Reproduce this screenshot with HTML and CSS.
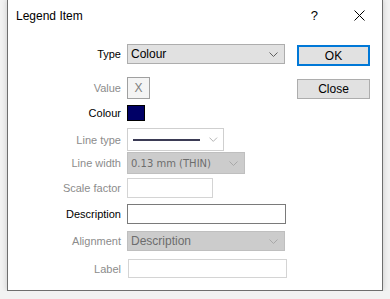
FILE: index.html
```html
<!DOCTYPE html>
<html lang="en">
<head>
    <meta charset="UTF-8">
    <meta name="viewport" content="width=device-width, initial-scale=1.0">
    <title>Legend Item</title>
    <link rel="stylesheet" href="styles.css">
</head>
<body>
    <div class="dialog">
        <div class="titlebar">
            <span class="title">Legend Item</span>
            <span class="help">?</span>
            <span class="close-x">
                <svg width="11" height="11" viewBox="0 0 11 11"><path d="M0.5 0.5 L10.5 10.5 M10.5 0.5 L0.5 10.5" stroke="#000" stroke-width="1" fill="none"/></svg>
            </span>
        </div>
        <div class="body">
            <div class="fields">
                <div class="row r-type">
                    <label>Type</label>
                    <div class="select wide">
                        <span>Colour</span>
                        <svg class="chev" width="9" height="5" viewBox="0 0 9 5"><path d="M0.5 0.5 L4.5 4.5 L8.5 0.5" stroke="#606060" fill="none"/></svg>
                    </div>
                </div>
                <div class="row r-value">
                    <label class="off">Value</label>
                    <div class="xbox">X</div>
                </div>
                <div class="row r-colour">
                    <label>Colour</label>
                    <div class="swatch"></div>
                </div>
                <div class="row r-linetype">
                    <label class="off">Line type</label>
                    <div class="linebox">
                        <span class="line"></span>
                        <svg class="chev" width="9" height="5" viewBox="0 0 9 5"><path d="M0.5 0.5 L4.5 4.5 L8.5 0.5" stroke="#b0b0b0" fill="none"/></svg>
                    </div>
                </div>
                <div class="row r-linewidth">
                    <label class="off">Line width</label>
                    <div class="select disabled lw">
                        <span class="tahoma">0.13 mm (THIN)</span>
                        <svg class="chev" width="9" height="5" viewBox="0 0 9 5"><path d="M0.5 0.5 L4.5 4.5 L8.5 0.5" stroke="#a8a8a8" fill="none"/></svg>
                    </div>
                </div>
                <div class="row r-scale">
                    <label class="off">Scale factor</label>
                    <div class="input light scale"></div>
                </div>
                <div class="row r-desc">
                    <label>Description</label>
                    <div class="input wide dark"></div>
                </div>
                <div class="row r-align">
                    <label class="off">Alignment</label>
                    <div class="select disabled wide">
                        <span>Description</span>
                        <svg class="chev" width="9" height="5" viewBox="0 0 9 5"><path d="M0.5 0.5 L4.5 4.5 L8.5 0.5" stroke="#a8a8a8" fill="none"/></svg>
                    </div>
                </div>
                <div class="row r-label">
                    <label class="off">Label</label>
                    <div class="input light wide shift"></div>
                </div>
            </div>
            <div class="buttons">
                <button class="btn default">OK</button>
                <button class="btn">Close</button>
            </div>
        </div>
    </div>
</body>
</html>
```

FILE: styles.css
```css
body { margin: 0; background: #f2f2f2; font-family: "Liberation Sans", Arial, sans-serif; font-size: 11px; color: #000; }
.dialog { margin: -1px 0 0 7px; width: 374px; height: 290px; background: #fff; border: 1px solid #6e6e6e; box-shadow: 0 0 6px rgba(0,0,0,0.18); }

.titlebar { display: flex; align-items: center; height: 31px; padding-left: 8px; }
.title { font-size: 12px; flex: 1; }
.help { font-size: 13px; margin-right: 36px; }
.close-x { display: flex; margin-right: 17px; }

.body { display: flex; padding-top: 13px; }
.fields { width: 280px; }
.row { display: flex; align-items: flex-start; }
.row label { width: 113px; text-align: right; margin-right: 6px; display: flex; align-items: center; justify-content: flex-end; }
.row label.off { color: #8c8c8c; }

.r-type { height: 33px; }
.r-type label { height: 20px; }
.r-value { height: 28px; }
.r-value label { height: 22px; }
.r-colour { height: 23px; }
.r-colour label { height: 16px; }
.r-linetype { height: 24px; }
.r-linetype label { height: 23px; }
.r-linewidth { height: 26px; }
.r-linewidth label { height: 22px; }
.r-scale { height: 26px; }
.r-scale label { height: 20px; }
.r-desc { height: 27px; }
.r-desc label { height: 20px; }
.r-align { height: 28px; }
.r-align label { height: 20px; }
.r-label label { height: 20px; }

.select { box-sizing: border-box; height: 20px; background: #e1e1e1; border: 1px solid #adadad; display: flex; align-items: center; padding: 0 6px 0 3px; font-size: 12px; }
.select span { flex: 1; }
.select.wide { width: 158px; }
.select.disabled { background: #cccccc; border-color: #bfbfbf; color: #6d6d6d; }
.select.lw { width: 118px; height: 22px; }
.tahoma { font-family: "DejaVu Sans", sans-serif; font-size: 10px; }
.chev { display: block; }

.xbox { box-sizing: border-box; width: 23px; height: 22px; border: 1px solid #a0a0a0; background: #f4f4f4; color: #808080; font-size: 12px; display: flex; align-items: center; justify-content: center; }
.swatch { box-sizing: border-box; width: 18px; height: 16px; background: #000066; border: 1px solid #000; }

.linebox { box-sizing: border-box; width: 97px; height: 23px; border: 1px solid #cfcfcf; background: #fff; display: flex; align-items: center; padding: 0 5px; }
.linebox .line { width: 71px; height: 2px; background: #3b3b55; margin-right: 9px; }

.input { box-sizing: border-box; height: 20px; background: #fff; border: 1px solid #7a7a7a; }
.input.light { border-color: #d4d4d4; }
.input.wide { width: 159px; }
.input.scale { width: 86px; }
.input.shift { margin-left: 1px; height: 19px; }

.buttons { display: flex; flex-direction: column; gap: 13px; padding-top: 1px; margin-left: 9px; }
.btn { box-sizing: border-box; width: 73px; height: 20px; background: #e1e1e1; border: 1px solid #adadad; font-family: "Liberation Sans", Arial, sans-serif; font-size: 12px; color: #000; padding: 0; }
.btn.default { border: 2px solid #0078d7; height: 21px; }
```
